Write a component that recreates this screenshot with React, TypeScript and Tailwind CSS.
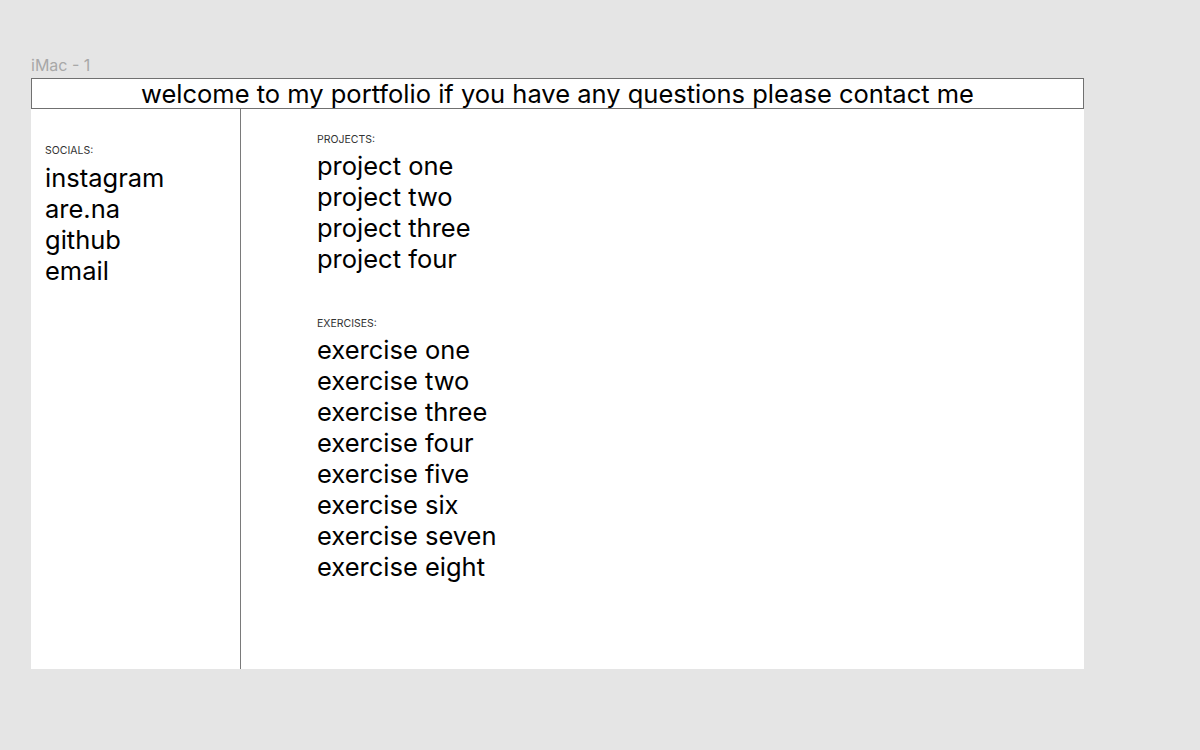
import React from "react";

const projects = ["project one", "project two", "project three", "project four"];
const exercises = [
  "exercise one",
  "exercise two",
  "exercise three",
  "exercise four",
  "exercise five",
  "exercise six",
  "exercise seven",
  "exercise eight",
];
const socials = ["instagram", "are.na", "github", "email"];

export default function App() {
  return (
    <div
      className="w-[1200px] h-[750px] bg-[#e5e5e5] overflow-hidden pl-[31px] pt-[55px]"
      style={{ fontFamily: "Inter, 'Noto Sans', sans-serif" }}
    >
      <div className="text-[16px] leading-[20px] text-[#a8a8a8] h-[23px]">iMac - 1</div>
      <div className="w-[1053px] h-[591px] bg-white flex flex-col">
        <div className="h-[31px] border border-[#707070] flex items-center justify-center text-[25.5px] leading-[30px] text-black">
          welcome to my portfolio if you have any questions please contact me
        </div>
        <div className="flex flex-1">
          <div className="w-[210px] border-r border-[#7a7a7a] pl-[14px] pt-[36px]">
            <div className="text-[10.5px] leading-[12px] text-[#333]">SOCIALS:</div>
            <div className="mt-[5px]">
              {socials.map((s) => (
                <div key={s} className="text-[25.5px] leading-[31px] text-black">
                  {s}
                </div>
              ))}
            </div>
          </div>
          <div className="pl-[76px] pt-[25px]">
            <div className="text-[10.5px] leading-[12px] text-[#333]">PROJECTS:</div>
            <div className="mt-[4px]">
              {projects.map((s) => (
                <div key={s} className="text-[25.5px] leading-[31px] text-black">
                  {s}
                </div>
              ))}
            </div>
            <div className="text-[10.5px] leading-[12px] text-[#333] mt-[44px]">EXERCISES:</div>
            <div className="mt-[4px]">
              {exercises.map((s) => (
                <div key={s} className="text-[25.5px] leading-[31px] text-black">
                  {s}
                </div>
              ))}
            </div>
          </div>
        </div>
      </div>
    </div>
  );
}
